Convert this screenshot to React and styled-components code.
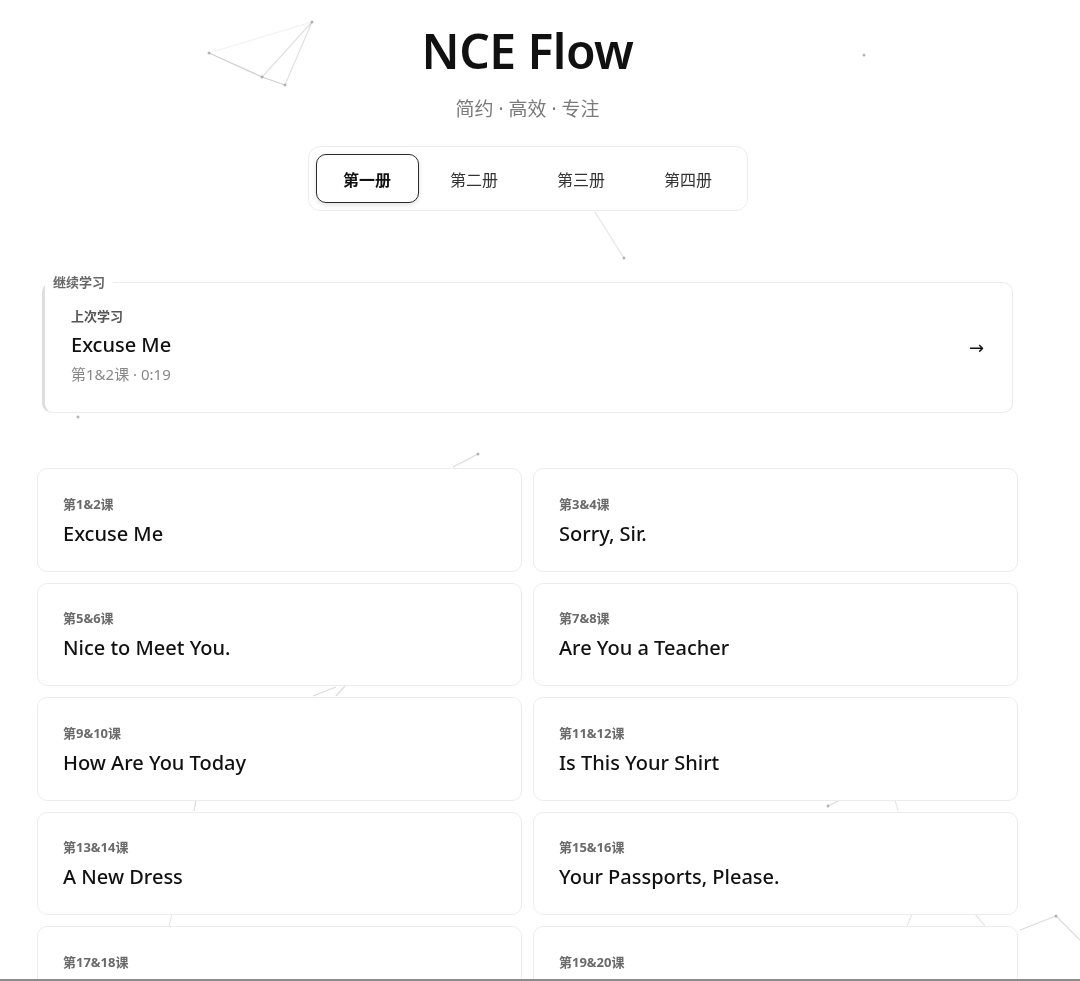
import React, { useState } from "react";
import styled, { createGlobalStyle } from "styled-components";

const GlobalStyle = createGlobalStyle`
  html, body { margin: 0; padding: 0; background: #ffffff; }
  body {
    font-family: "Noto Sans", "Noto Sans CJK SC", sans-serif;
    color: #111;
    overflow: hidden;
  }
  * { box-sizing: border-box; }
`;

const Backdrop = styled.svg`
  position: fixed;
  inset: 0;
  width: 1080px;
  height: 981px;
  pointer-events: none;
  z-index: 0;
`;

const Page = styled.main`
  position: relative;
  z-index: 1;
  width: 981px;
  margin-left: 37px;
  padding-top: 22px;
  display: flex;
  flex-direction: column;
  align-items: center;
`;

const Title = styled.h1`
  margin: 0;
  font-size: 48px;
  line-height: 58px;
  font-weight: 600;
  letter-spacing: -0.5px;
  color: #111;
`;

const Subtitle = styled.p`
  margin: 16px 0 0;
  font-size: 19px;
  line-height: 26px;
  color: #7a7a7a;
`;

const Tabs = styled.nav`
  margin-top: 24px;
  display: flex;
  gap: 4px;
  padding: 7px;
  border: 1px solid #ececec;
  border-radius: 12px;
  background: #fff;
`;

const Tab = styled.button`
  width: 103px;
  height: 49px;
  border-radius: 10px;
  border: 1px solid ${(p) => (p.$active ? "#2a2a2a" : "transparent")};
  background: #fff;
  box-shadow: ${(p) => (p.$active ? "0 2px 5px rgba(0,0,0,0.12)" : "none")};
  font-family: "Noto Sans CJK SC", sans-serif;
  font-size: 16px;
  font-weight: ${(p) => (p.$active ? 700 : 400)};
  color: ${(p) => (p.$active ? "#111" : "#333")};
  cursor: pointer;
  padding: 0;
`;

const Continue = styled.fieldset`
  align-self: stretch;
  margin: 62px 5px 0;
  padding: 0;
  border: 1px solid #ececec;
  border-left: 3px solid #dedede;
  border-radius: 10px;
  background: #fff;
  min-width: 0;
`;

const Legend = styled.legend`
  padding: 0 8px;
  margin: 0;
  font-family: "Noto Sans CJK SC", sans-serif;
  font-size: 13px;
  font-weight: 600;
  color: #666;
  line-height: 18px;
`;

const ContinueRow = styled.div`
  display: flex;
  align-items: center;
  justify-content: space-between;
  padding: 16px 28px 28px 26px;
`;

const ContinueBody = styled.div`
  display: flex;
  flex-direction: column;
`;

const Eyebrow = styled.span`
  font-family: "Noto Sans CJK SC", sans-serif;
  font-size: 13px;
  font-weight: 700;
  color: #555;
  line-height: 18px;
`;

const ContinueTitle = styled.span`
  margin-top: 7px;
  font-size: 20px;
  line-height: 26px;
  font-weight: 500;
  color: #111;
`;

const Meta = styled.span`
  margin-top: 6px;
  font-size: 15px;
  line-height: 20px;
  color: #888;
  font-family: "Noto Sans", "Noto Sans CJK SC", sans-serif;
`;

const Arrow = styled.span`
  font-size: 18px;
  color: #111;
  margin-top: 4px;
  font-family: "DejaVu Sans", sans-serif;
`;

const Grid = styled.section`
  align-self: stretch;
  margin-top: 55px;
  display: grid;
  grid-template-columns: 1fr 1fr;
  column-gap: 11px;
  row-gap: 11px;
`;

const Card = styled.article`
  height: 103.5px;
  border: 1px solid #ececec;
  border-radius: 10px;
  background: #fff;
  padding: 0 25px;
  display: flex;
  flex-direction: column;
  justify-content: center;
`;

const Lesson = styled.span`
  font-family: "Noto Sans", "Noto Sans CJK SC", sans-serif;
  font-size: 13px;
  font-weight: 700;
  color: #6a6a6a;
  line-height: 18px;
  margin-top: 2px;
`;

const LessonTitle = styled.span`
  margin-top: 8px;
  font-size: 20px;
  font-weight: 500;
  line-height: 26px;
  color: #111;
`;

const BottomEdge = styled.div`
  position: fixed;
  left: 0;
  right: 0;
  top: 979px;
  height: 40px;
  background: #fff;
  border-top: 2px solid #8c8c8c;
  z-index: 5;
`;

const lessons = [
  ["第1&2课", "Excuse Me"],
  ["第3&4课", "Sorry, Sir."],
  ["第5&6课", "Nice to Meet You."],
  ["第7&8课", "Are You a Teacher"],
  ["第9&10课", "How Are You Today"],
  ["第11&12课", "Is This Your Shirt"],
  ["第13&14课", "A New Dress"],
  ["第15&16课", "Your Passports, Please."],
  ["第17&18课", "Tell Me About It"],
  ["第19&20课", "Tired and Thirsty"],
];

const lines = [
  [209, 53, 312, 22, 0.12],
  [312, 22, 262, 77, 0.25],
  [312, 22, 285, 85, 0.25],
  [209, 53, 262, 77, 0.4],
  [262, 77, 285, 85, 0.4],
  [595, 212, 624, 258, 0.22],
  [453, 467, 478, 454, 0.3],
  [313, 696, 336, 687, 0.3],
  [336, 696, 345, 686, 0.3],
  [196, 800, 194, 811, 0.3],
  [828, 806, 840, 800, 0.3],
  [895, 800, 898, 811, 0.2],
  [172, 914, 169, 926, 0.2],
  [912, 914, 907, 926, 0.2],
  [975, 914, 985, 926, 0.2],
  [1020, 930, 1056, 916, 0.3],
  [1056, 916, 1080, 940, 0.3],
];

const dots = [
  [312, 22],
  [209, 53],
  [262, 77],
  [285, 85],
  [864, 55],
  [624, 258],
  [78, 417],
  [478, 454],
  [828, 806],
  [1056, 916],
];

export default function App() {
  const [book, setBook] = useState(0);
  const books = ["第一册", "第二册", "第三册", "第四册"];
  return (
    <>
      <GlobalStyle />
      <Backdrop viewBox="0 0 1080 981">
        {lines.map(([x1, y1, x2, y2, o], i) => (
          <line key={i} x1={x1} y1={y1} x2={x2} y2={y2} stroke="#888" strokeOpacity={o} strokeWidth="1.2" />
        ))}
        {dots.map(([cx, cy], i) => (
          <circle key={i} cx={cx} cy={cy} r="1.5" fill="#999" fillOpacity="0.7" />
        ))}
      </Backdrop>
      <Page>
        <Title>NCE Flow</Title>
        <Subtitle>简约 · 高效 · 专注</Subtitle>
        <Tabs>
          {books.map((b, i) => (
            <Tab key={b} $active={i === book} onClick={() => setBook(i)}>
              {b}
            </Tab>
          ))}
        </Tabs>
        <Continue>
          <Legend>继续学习</Legend>
          <ContinueRow>
            <ContinueBody>
              <Eyebrow>上次学习</Eyebrow>
              <ContinueTitle>Excuse Me</ContinueTitle>
              <Meta>第1&2课 · 0:19</Meta>
            </ContinueBody>
            <Arrow>→</Arrow>
          </ContinueRow>
        </Continue>
        <Grid>
          {lessons.map(([n, t]) => (
            <Card key={n}>
              <Lesson>{n}</Lesson>
              <LessonTitle>{t}</LessonTitle>
            </Card>
          ))}
        </Grid>
      </Page>
      <BottomEdge />
    </>
  );
}
